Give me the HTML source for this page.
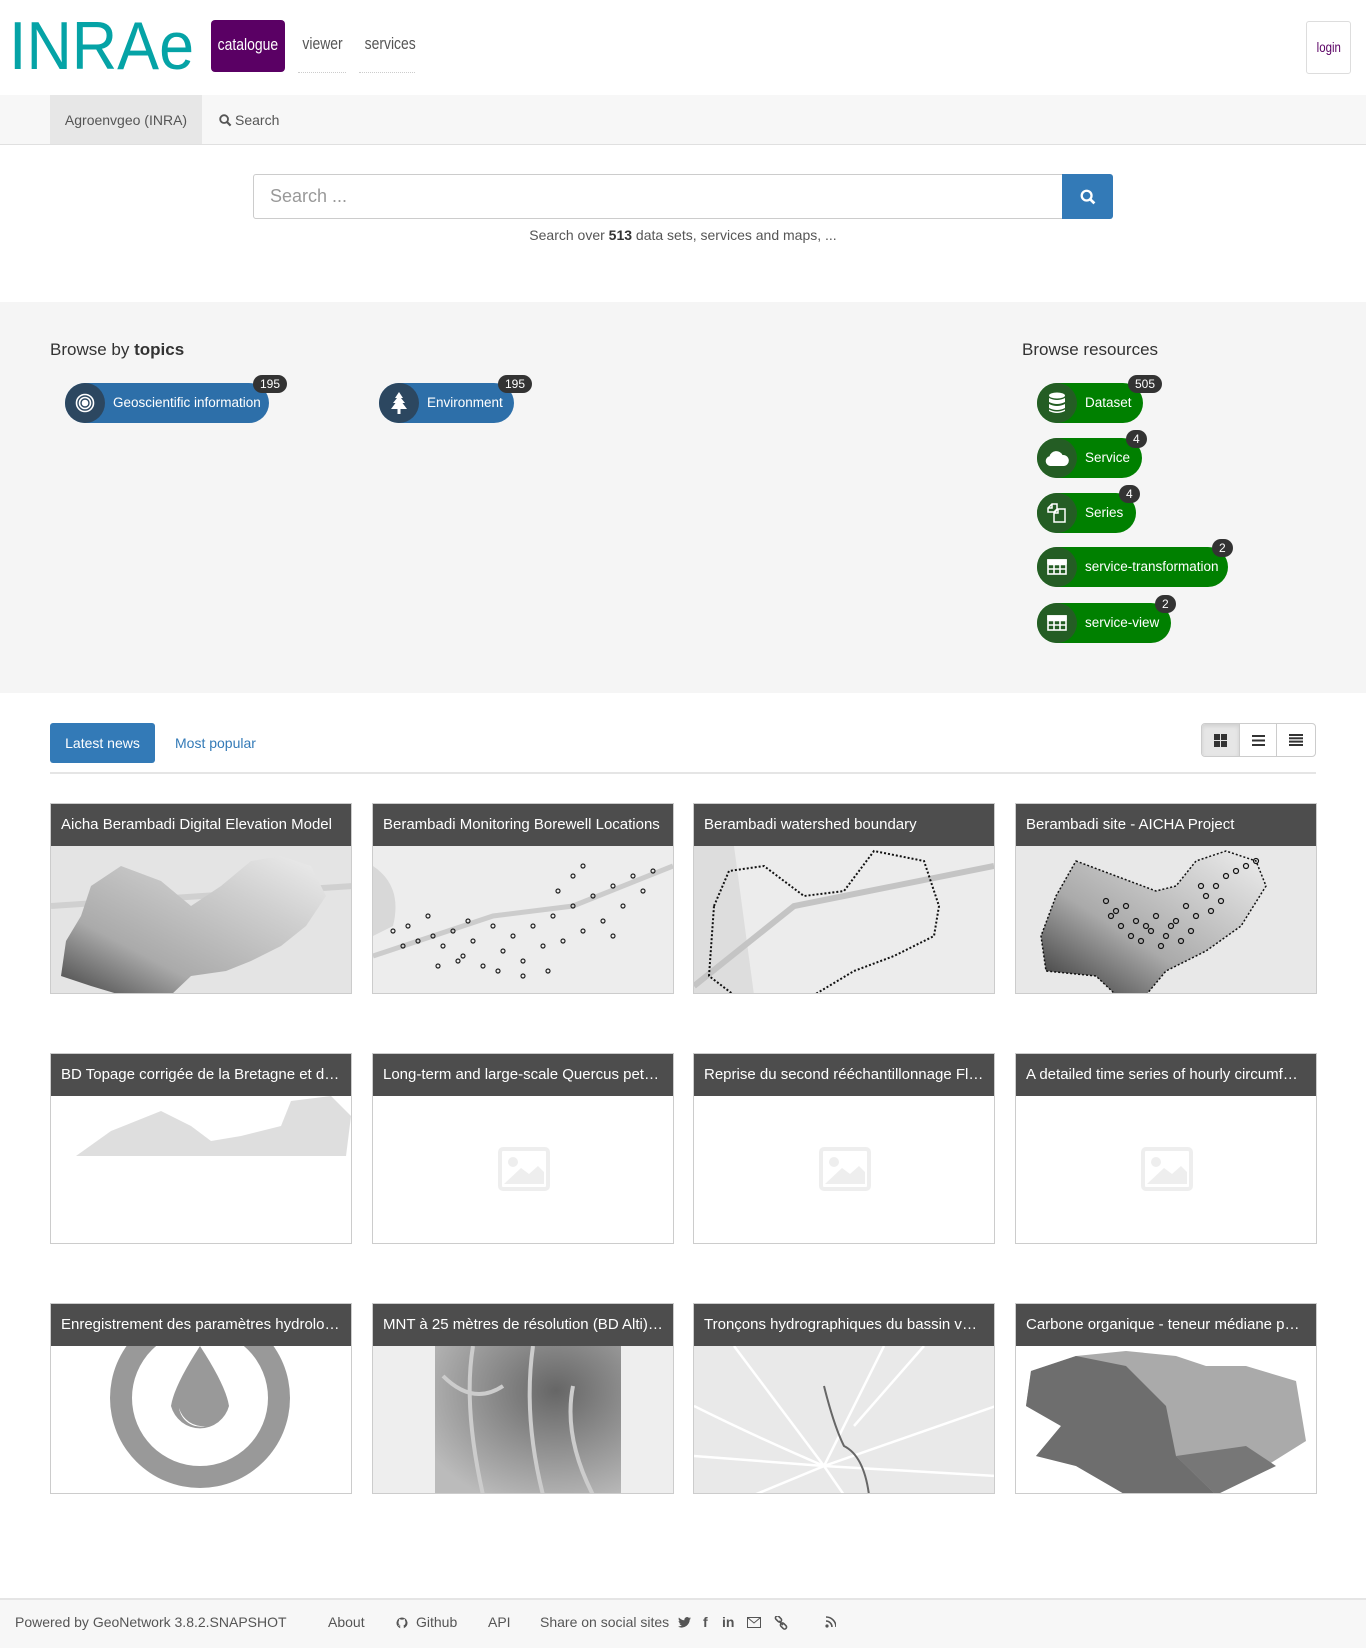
<!DOCTYPE html>
<html><head><meta charset="utf-8">
<style>
*{box-sizing:border-box;margin:0;padding:0}
body{width:1366px;height:1648px;position:relative;background:#fff;font-family:"Liberation Sans",sans-serif;color:#333;overflow:hidden}
.a{position:absolute}
.pill{position:absolute;height:40px;border-radius:20px;color:#fff;font-size:13.5px;line-height:40px;white-space:nowrap}
.pill .ic{position:absolute;left:0;top:0;width:40px;height:40px;border-radius:20px;display:flex;align-items:center;justify-content:center}
.pill .bd{position:absolute;top:-8px;height:18px;line-height:18px;border-radius:9px;background:#333;color:#fff;font-size:12px;padding:0 7px}
.blue{background:#2d6fa9}.blue .ic{background:#2c4760}
.green{background:#008000}.green .ic{background:#245d24}
.card{position:absolute;width:302px;height:191px;border:1px solid #ccc;overflow:hidden;background:#fff}
.card .t{height:42px;background:#4d4d4d;color:#fff;font-size:15px;line-height:42px;padding:0 10px;white-space:nowrap;overflow:hidden;text-overflow:ellipsis}
.card svg{display:block}
.ft{position:absolute;top:1614px;font-size:14px;color:#555}
.cond{display:inline-block;transform:scaleX(0.82);transform-origin:center}
</style></head><body>

<!-- header -->
<svg class="a" style="left:8px;top:17px" width="190" height="56" viewBox="0 0 190 56">
<text x="1" y="52" font-family="Liberation Sans" font-size="68" fill="#05a3a6" textLength="185" lengthAdjust="spacingAndGlyphs">INRAe</text>
</svg>
<div class="a" style="left:211px;top:20px;width:74px;height:52px;background:#5a0064;border-radius:4px;color:#fff;font-size:17px;line-height:50px;text-align:center"><span class="cond">catalogue</span></div>
<div class="a" style="left:298px;top:34px;width:48px;height:39px;font-size:17px;color:#555;text-align:center;border-bottom:1px dotted #ccc"><span class="cond">viewer</span></div>
<div class="a" style="left:359px;top:34px;width:56px;height:39px;font-size:17px;color:#555;text-align:center;border-bottom:1px dotted #ccc"><span class="cond">services</span></div>
<div class="a" style="left:1306px;top:21px;width:45px;height:53px;border:1px solid #ddd;border-radius:3px;text-align:center;line-height:51px;font-size:14px;color:#5a0064;text-decoration:underline"><span class="cond">login</span></div>

<!-- navbar -->
<div class="a" style="left:0;top:95px;width:1366px;height:50px;background:#f7f7f7;border-bottom:1px solid #e0e0e0"></div>
<div class="a" style="left:50px;top:95px;width:152px;height:49px;background:#e7e7e7;color:#555;font-size:14px;line-height:50px;text-align:center">Agroenvgeo (INRA)</div>
<div class="a" style="left:219px;top:95px;height:49px;line-height:50px;font-size:14px;color:#555">
<svg width="13" height="13" viewBox="0 0 14 14" style="vertical-align:-2px;margin-right:3px"><circle cx="5.5" cy="5.5" r="4.2" fill="none" stroke="#555" stroke-width="2"/><path d="M8.5 8.5L12.5 12.5" stroke="#555" stroke-width="2.4"/></svg>Search</div>

<!-- search -->
<div class="a" style="left:253px;top:174px;width:810px;height:45px;border:1px solid #ccc;border-radius:3px 0 0 3px;font-size:18px;color:#999;line-height:43px;padding-left:16px">Search ...</div>
<div class="a" style="left:1062px;top:174px;width:51px;height:45px;background:#337ab7;border-radius:0 3px 3px 0;display:flex;align-items:center;justify-content:center">
<svg width="16" height="16" viewBox="0 0 14 14"><circle cx="5.8" cy="5.8" r="4.3" fill="none" stroke="#fff" stroke-width="2"/><path d="M9 9L12.6 12.6" stroke="#fff" stroke-width="2.4"/></svg></div>
<div class="a" style="left:0;top:227px;width:1366px;text-align:center;font-size:14px;color:#555">Search over <b style="color:#333">513</b> data sets, services and maps, ...</div>

<!-- browse -->
<div class="a" style="left:0;top:302px;width:1366px;height:391px;background:#f5f5f5"></div>
<div class="a" style="left:50px;top:340px;font-size:17px;color:#333">Browse by <b>topics</b></div>
<div class="a" style="left:1022px;top:340px;font-size:17px;color:#333">Browse resources</div>

<div class="pill blue" style="left:65px;top:383px;width:204px;padding-left:48px">
<div class="ic"><svg width="20" height="20" viewBox="0 0 20 20" fill="none" stroke="#fff" stroke-width="1.6"><circle cx="10" cy="10" r="8.5"/><circle cx="10" cy="10" r="5.5"/><circle cx="10" cy="10" r="2.5" fill="#fff"/></svg></div>Geoscientific information<span class="bd" style="left:188px">195</span></div>
<div class="pill blue" style="left:379px;top:383px;width:135px;padding-left:48px">
<div class="ic"><svg width="18" height="22" viewBox="0 0 18 22" fill="#fff"><path d="M9 0L13 6H11L15 11H12.5L17 17H10.5V22H7.5V17H1L5.5 11H3L7 6H5Z"/></svg></div>Environment<span class="bd" style="left:119px">195</span></div>

<div class="pill green" style="left:1037px;top:383px;width:106px;padding-left:48px">
<div class="ic"><svg width="18" height="22" viewBox="0 0 18 22" fill="#fff"><ellipse cx="9" cy="3.5" rx="8" ry="3"/><path d="M1 6Q9 10 17 6V10Q9 14 1 10Z"/><path d="M1 12Q9 16 17 12V16Q9 20 1 16Z"/><path d="M1 17.5Q9 21.5 17 17.5V19Q9 23 1 19Z"/></svg></div>Dataset<span class="bd" style="left:91px">505</span></div>
<div class="pill green" style="left:1037px;top:438px;width:105px;padding-left:48px">
<div class="ic"><svg width="24" height="16" viewBox="0 0 24 16" fill="#fff"><path d="M5 16A5 5 0 0 1 4.5 6.2A7 7 0 0 1 17.5 5A5.5 5.5 0 0 1 19 16Z"/></svg></div>Service<span class="bd" style="left:89px">4</span></div>
<div class="pill green" style="left:1037px;top:493px;width:99px;padding-left:48px">
<div class="ic"><svg width="22" height="22" viewBox="0 0 22 22" fill="none" stroke="#fff" stroke-width="1.5"><path d="M6 2H11V7L8 10H2V6Z"/><path d="M2 6H6V2"/><path d="M12 7H19V20H8V11L12 7Z"/><path d="M8 11H12V7"/></svg></div>Series<span class="bd" style="left:82px">4</span></div>
<div class="pill green" style="left:1037px;top:547px;width:191px;padding-left:48px">
<div class="ic"><svg width="20" height="16" viewBox="0 0 20 16" fill="none" stroke="#fff" stroke-width="1.6"><rect x="1" y="1" width="18" height="14"/><path d="M1 5.5H19M1 10H19M7 1V15M13 1V15"/><rect x="1" y="1" width="18" height="3.5" fill="#fff"/></svg></div>service-transformation<span class="bd" style="left:175px">2</span></div>
<div class="pill green" style="left:1037px;top:603px;width:134px;padding-left:48px">
<div class="ic"><svg width="20" height="16" viewBox="0 0 20 16" fill="none" stroke="#fff" stroke-width="1.6"><rect x="1" y="1" width="18" height="14"/><path d="M1 5.5H19M1 10H19M7 1V15M13 1V15"/><rect x="1" y="1" width="18" height="3.5" fill="#fff"/></svg></div>service-view<span class="bd" style="left:118px">2</span></div>

<!-- tabs -->
<div class="a" style="left:50px;top:723px;width:105px;height:40px;background:#337ab7;border-radius:3px;color:#fff;font-size:14px;line-height:40px;text-align:center">Latest news</div>
<div class="a" style="left:175px;top:723px;height:40px;line-height:40px;font-size:14px;color:#337ab7">Most popular</div>
<div class="a" style="left:1201px;top:723px;width:115px;height:34px;border:1px solid #ccc;border-radius:4px;overflow:hidden;display:flex">
<div style="width:38px;background:#e6e6e6;border-right:1px solid #ccc;display:flex;align-items:center;justify-content:center;box-shadow:inset 0 2px 4px rgba(0,0,0,.1)"><svg width="13" height="13"><rect x="0" y="0" width="6" height="6" fill="#333"/><rect x="7" y="0" width="6" height="6" fill="#333"/><rect x="0" y="7" width="6" height="6" fill="#333"/><rect x="7" y="7" width="6" height="6" fill="#333"/></svg></div>
<div style="width:37px;border-right:1px solid #ccc;display:flex;align-items:center;justify-content:center"><svg width="13" height="11"><rect y="0" width="13" height="2" fill="#333"/><rect y="4.5" width="13" height="2" fill="#333"/><rect y="9" width="13" height="2" fill="#333"/></svg></div>
<div style="flex:1;display:flex;align-items:center;justify-content:center"><svg width="14" height="12"><rect y="0" width="14" height="2" fill="#333"/><rect y="3.3" width="14" height="2" fill="#333"/><rect y="6.6" width="14" height="2" fill="#333"/><rect y="10" width="14" height="2" fill="#333"/></svg></div>
</div>
<div class="a" style="left:50px;top:772px;width:1266px;height:2px;background:#e5e5e5"></div>

<!-- row 1 -->
<div class="card" style="left:50px;top:803px"><div class="t">Aicha Berambadi Digital Elevation Model</div>
<svg width="302" height="149" viewBox="0 0 302 149"><rect width="302" height="149" fill="#e4e4e4"/><path d="M0 60L302 40" stroke="#d0d0d0" stroke-width="6"/>
<defs><linearGradient id="g1" x1="0" y1="1" x2="1" y2="0"><stop offset="0" stop-color="#444"/><stop offset="0.3" stop-color="#aaa"/><stop offset="0.7" stop-color="#cfcfcf"/><stop offset="1" stop-color="#eee"/></linearGradient></defs>
<path d="M40 40L70 20L110 35L140 60L170 40L200 15L230 10L260 20L275 50L255 80L230 100L200 115L175 125L140 130L120 149H70L40 140L10 130L15 95L30 70Z" fill="url(#g1)"/></svg></div>

<div class="card" style="left:372px;top:803px"><div class="t">Berambadi Monitoring Borewell Locations</div>
<svg width="302" height="149" viewBox="0 0 302 149"><rect width="302" height="149" fill="#ededed"/><path d="M0 110L120 70L200 60L300 20" stroke="#ccc" stroke-width="5" fill="none"/><path d="M0 20Q30 40 20 80L0 90Z" fill="#d8d8d8"/>
<g fill="none" stroke="#222" stroke-width="1.2">
<circle cx="20" cy="85" r="2"/><circle cx="35" cy="80" r="2"/><circle cx="45" cy="95" r="2"/><circle cx="55" cy="70" r="2"/><circle cx="60" cy="90" r="2"/><circle cx="70" cy="100" r="2"/><circle cx="80" cy="85" r="2"/><circle cx="90" cy="110" r="2"/><circle cx="100" cy="95" r="2"/><circle cx="110" cy="120" r="2"/><circle cx="120" cy="80" r="2"/><circle cx="130" cy="105" r="2"/><circle cx="140" cy="90" r="2"/><circle cx="150" cy="115" r="2"/><circle cx="160" cy="80" r="2"/><circle cx="170" cy="100" r="2"/><circle cx="180" cy="70" r="2"/><circle cx="190" cy="95" r="2"/><circle cx="200" cy="60" r="2"/><circle cx="210" cy="85" r="2"/><circle cx="220" cy="50" r="2"/><circle cx="230" cy="75" r="2"/><circle cx="240" cy="40" r="2"/><circle cx="250" cy="60" r="2"/><circle cx="260" cy="30" r="2"/><circle cx="270" cy="45" r="2"/><circle cx="280" cy="25" r="2"/><circle cx="200" cy="30" r="2"/><circle cx="210" cy="20" r="2"/><circle cx="65" cy="120" r="2"/><circle cx="150" cy="130" r="2"/><circle cx="175" cy="125" r="2"/><circle cx="95" cy="75" r="2"/><circle cx="240" cy="90" r="2"/><circle cx="185" cy="45" r="2"/><circle cx="30" cy="100" r="2"/><circle cx="85" cy="115" r="2"/><circle cx="125" cy="125" r="2"/></g></svg></div>

<div class="card" style="left:693px;top:803px"><div class="t">Berambadi watershed boundary</div>
<svg width="302" height="149" viewBox="0 0 302 149"><rect width="302" height="149" fill="#ddd"/><path d="M40 0H302V149H60Z" fill="#ececec"/><path d="M0 140L100 60L300 20" stroke="#c4c4c4" stroke-width="6" fill="none"/>
<path d="M20 60L35 25L70 20L110 50L150 45L180 5L230 15L245 60L240 90L200 110L160 125L120 149H40L15 130Z" fill="none" stroke="#111" stroke-width="2" stroke-dasharray="2 2"/></svg></div>

<div class="card" style="left:1015px;top:803px"><div class="t">Berambadi site - AICHA Project</div>
<svg width="302" height="149" viewBox="0 0 302 149"><rect width="302" height="149" fill="#e8e8e8"/>
<defs><linearGradient id="g4" x1="0" y1="1" x2="1" y2="0"><stop offset="0" stop-color="#333"/><stop offset="0.4" stop-color="#aaa"/><stop offset="1" stop-color="#eee"/></linearGradient></defs>
<path d="M60 15L100 30L140 45L160 40L180 15L210 5L240 15L250 40L225 80L190 105L150 125L130 149H100L80 130L30 125L25 90L40 50Z" fill="url(#g4)" stroke="#111" stroke-width="1.5" stroke-dasharray="2 2"/>
<g fill="none" stroke="#111" stroke-width="1.2"><circle cx="90" cy="55" r="2.5"/><circle cx="100" cy="65" r="2.5"/><circle cx="110" cy="60" r="2.5"/><circle cx="120" cy="75" r="2.5"/><circle cx="130" cy="80" r="2.5"/><circle cx="140" cy="70" r="2.5"/><circle cx="150" cy="90" r="2.5"/><circle cx="160" cy="75" r="2.5"/><circle cx="170" cy="60" r="2.5"/><circle cx="180" cy="70" r="2.5"/><circle cx="190" cy="50" r="2.5"/><circle cx="200" cy="40" r="2.5"/><circle cx="210" cy="30" r="2.5"/><circle cx="220" cy="25" r="2.5"/><circle cx="230" cy="20" r="2.5"/><circle cx="125" cy="95" r="2.5"/><circle cx="145" cy="100" r="2.5"/><circle cx="175" cy="85" r="2.5"/><circle cx="195" cy="65" r="2.5"/><circle cx="105" cy="80" r="2.5"/><circle cx="115" cy="90" r="2.5"/><circle cx="205" cy="55" r="2.5"/><circle cx="240" cy="15" r="2.5"/><circle cx="165" cy="95" r="2.5"/><circle cx="185" cy="40" r="2.5"/><circle cx="135" cy="85" r="2.5"/><circle cx="155" cy="80" r="2.5"/><circle cx="95" cy="70" r="2.5"/></g></svg></div>

<!-- row 2 -->
<div class="card" style="left:50px;top:1053px"><div class="t">BD Topage corrigée de la Bretagne et des Pays de la Loire</div>
<svg width="302" height="149" viewBox="0 0 302 149"><path d="M25 60L60 35L110 15L140 30L160 45L190 40L230 30L240 5L280 0L300 20L295 60H25Z" fill="#c8c8c8" opacity=".6"/></svg></div>
<div class="card" style="left:372px;top:1053px"><div class="t">Long-term and large-scale Quercus petraea</div>
<svg width="302" height="149" viewBox="0 0 302 149"><rect x="127" y="53" width="48" height="40" rx="3" fill="none" stroke="#eee" stroke-width="4"/><circle cx="140" cy="66" r="5" fill="#eee"/><path d="M131 88L148 72L156 78L165 70L171 76V88Z" fill="#eee"/></svg></div>
<div class="card" style="left:693px;top:1053px"><div class="t">Reprise du second rééchantillonnage Floristique</div>
<svg width="302" height="149" viewBox="0 0 302 149"><rect x="127" y="53" width="48" height="40" rx="3" fill="none" stroke="#eee" stroke-width="4"/><circle cx="140" cy="66" r="5" fill="#eee"/><path d="M131 88L148 72L156 78L165 70L171 76V88Z" fill="#eee"/></svg></div>
<div class="card" style="left:1015px;top:1053px"><div class="t">A detailed time series of hourly circumference</div>
<svg width="302" height="149" viewBox="0 0 302 149"><rect x="127" y="53" width="48" height="40" rx="3" fill="none" stroke="#eee" stroke-width="4"/><circle cx="140" cy="66" r="5" fill="#eee"/><path d="M131 88L148 72L156 78L165 70L171 76V88Z" fill="#eee"/></svg></div>

<!-- row 3 -->
<div class="card" style="left:50px;top:1303px"><div class="t">Enregistrement des paramètres hydrologiques</div>
<svg width="302" height="149" viewBox="0 0 302 149"><circle cx="149" cy="52" r="90" fill="#999"/><circle cx="149" cy="52" r="68" fill="#fff"/><path d="M149 0Q175 40 178 60A30 30 0 0 1 120 60Q123 40 149 0Z" fill="#999"/><path d="M128 62A22 22 0 0 0 155 80A25 25 0 0 1 128 62Z" fill="#fff"/></svg></div>
<div class="card" style="left:372px;top:1303px"><div class="t">MNT à 25 mètres de résolution (BD Alti) du bassin versant</div>
<svg width="302" height="149" viewBox="0 0 302 149"><rect width="302" height="149" fill="#eee"/>
<defs><radialGradient id="g10" cx="0.65" cy="0.3" r="0.8"><stop offset="0" stop-color="#666"/><stop offset="0.6" stop-color="#999"/><stop offset="1" stop-color="#bbb"/></radialGradient></defs>
<rect x="62" y="0" width="186" height="149" fill="url(#g10)"/><path d="M100 0Q90 60 110 149M160 0Q150 70 170 149M200 40Q190 90 220 149M70 30Q100 60 130 40" stroke="#ccc" stroke-width="4" fill="none"/></svg></div>
<div class="card" style="left:693px;top:1303px"><div class="t">Tronçons hydrographiques du bassin versant</div>
<svg width="302" height="149" viewBox="0 0 302 149"><rect width="302" height="149" fill="#e9e9e9"/><g stroke="#fff" stroke-width="2.5" fill="none"><path d="M0 60Q60 90 130 120L302 60"/><path d="M40 0L130 120L150 149"/><path d="M190 0L130 120L60 149"/><path d="M0 110L130 120L302 130"/><path d="M230 0L160 80"/></g><path d="M130 40Q140 80 150 100Q170 110 175 149" stroke="#666" stroke-width="2" fill="none"/></svg></div>
<div class="card" style="left:1015px;top:1303px"><div class="t">Carbone organique - teneur médiane par canton</div>
<svg width="302" height="149" viewBox="0 0 302 149"><path d="M15 25L60 10L110 5L160 10L190 20L230 20L280 35L290 95L250 120L200 149H110L60 120L20 110L45 80L10 60Z" fill="#aaa"/><path d="M15 25L60 10L110 20L150 60L160 110L200 149H110L60 120L20 110L45 80L10 60Z" fill="#6e6e6e"/><path d="M160 110L230 100L260 120L200 149Z" fill="#777"/></svg></div>

<!-- footer -->
<div class="a" style="left:0;top:1598px;width:1366px;height:50px;background:#f7f7f7;border-top:2px solid #e5e5e5"></div>
<div class="ft" style="left:15px">Powered by GeoNetwork 3.8.2.SNAPSHOT</div>
<div class="ft" style="left:328px">About</div>
<svg class="a" style="left:396px;top:1617px" width="12" height="12" viewBox="0 0 12 12"><path d="M6 0.5A5.5 5.5 0 0 0 4.2 11.2V9.2Q2.5 9.3 2 7.8Q3 8 3.6 8.7Q4.2 9 4.5 8.4Q2.5 8 2.5 5.3Q2.5 4.2 3.1 3.6Q2.9 2.7 3.3 2Q4 2 4.8 2.6H7.2Q8 2 8.7 2Q9.1 2.7 8.9 3.6Q9.5 4.2 9.5 5.3Q9.5 8 7.5 8.4Q7.8 8.9 7.8 9.6V11.2A5.5 5.5 0 0 0 6 0.5Z" fill="#555"/></svg>
<div class="ft" style="left:416px">Github</div>
<div class="ft" style="left:488px">API</div>
<div class="ft" style="left:540px">Share on social sites</div>
<svg class="a" style="left:678px;top:1617px" width="13" height="11" viewBox="0 0 13 11"><path d="M13 1.3Q12.3 1.6 11.5 1.7Q12.3 1.2 12.6 0.3Q11.9 0.7 11 0.9A2.7 2.7 0 0 0 6.4 3.3Q3.2 3.2 0.9 0.5Q0 2.8 1.8 4.2Q1.2 4.2 0.6 3.9Q0.7 5.8 2.6 6.5Q2 6.7 1.4 6.6Q2 8.2 3.9 8.3Q2.1 9.7 0 9.5Q4.3 12 8.5 8.9Q11.7 6.2 11.7 2.8Q12.4 2.2 13 1.3Z" fill="#555"/></svg>
<div class="ft" style="left:703px;font-weight:bold">f</div>
<div class="ft" style="left:722px;font-weight:bold">in</div>
<svg class="a" style="left:747px;top:1617px" width="14" height="11"><rect x="0.5" y="0.5" width="13" height="10" fill="none" stroke="#555"/><path d="M0.5 0.5L7 6L13.5 0.5" fill="none" stroke="#555"/></svg>
<svg class="a" style="left:774px;top:1616px" width="14" height="14" viewBox="0 0 14 14"><g fill="none" stroke="#555" stroke-width="1.6"><rect x="1" y="1" width="7" height="4" rx="2" transform="rotate(45 4.5 3)"/><rect x="6" y="8" width="7" height="4" rx="2" transform="rotate(45 9.5 10)"/><path d="M5 5L9 9"/></g></svg>
<svg class="a" style="left:825px;top:1616px" width="11" height="12"><circle cx="2" cy="10" r="1.6" fill="#555"/><path d="M1 5A6 6 0 0 1 7 11M1 1A10 10 0 0 1 11 11" stroke="#555" stroke-width="1.6" fill="none"/></svg>
</body></html>
